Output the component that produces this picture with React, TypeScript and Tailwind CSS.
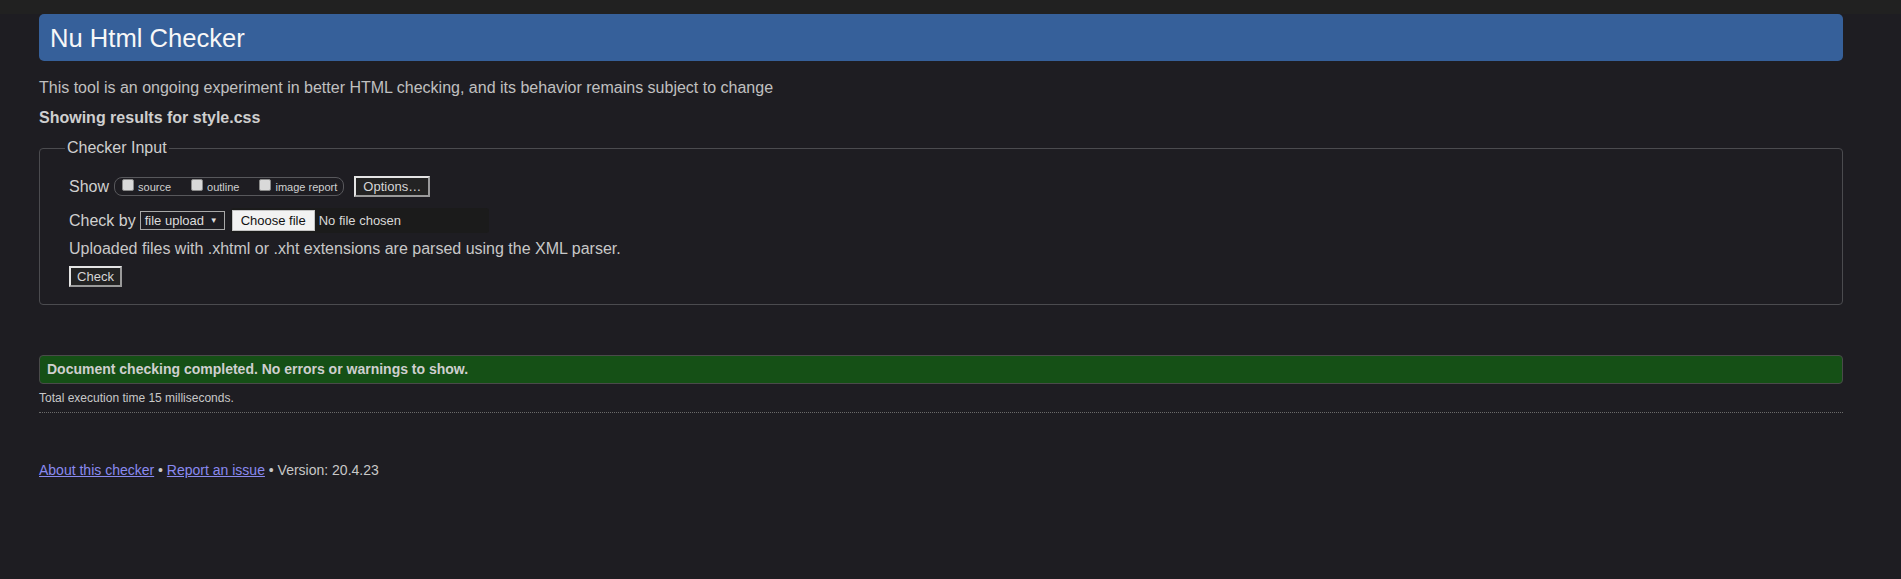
const Checkbox = ({ label }: { label: string }) => (
  <label className="flex items-center gap-[4px]">
    <span className="mb-[4px] h-[12px] w-[12px] rounded-[2px] border border-[#8a8a8a] bg-[#d9d9d9]" />
    <span className="text-[11px] leading-[14px] text-[#d0d0d0]">{label}</span>
  </label>
);

const App = () => {
  return (
    <div className="min-h-[579px] border-t-[14px] border-t-[#212121] bg-[#1e1d22] pl-[39px] pr-[58px] font-['Liberation_Sans',Arial,sans-serif] text-[#c8c8c8]">
      {/* Header */}
      <div className="flex h-[47px] items-center rounded-[5px] bg-[#36609a] px-[11px]">
        <h1 className="text-[25.6px] leading-[30px] text-[#f7f7f7]">Nu Html Checker</h1>
      </div>

      <p className="mt-[17px] text-[16px] leading-[20px] text-[#c0c0c0]">
        This tool is an ongoing experiment in better HTML checking, and its behavior remains subject to change
      </p>
      <p className="mt-[10px] text-[16px] font-bold leading-[20px] text-[#cfcfcf]">
        Showing results for style.css
      </p>

      {/* Checker input */}
      <fieldset className="mt-[10px] rounded-[4px] border border-[#4b4b4f] pb-[16px] pl-[29px]">
        <legend className="ml-[-4px] px-[2px] text-[16px] leading-[20px] text-[#cfcfcf]">Checker Input</legend>

        <div className="mt-[18px] flex h-[21px] items-center">
          <span className="text-[16px] leading-[20px] text-[#d0d0d0]">Show</span>
          <div className="ml-[5px] flex h-[19px] items-center gap-[20px] rounded-[8px] border border-[#58585c] pl-[7px] pr-[6px]">
            <Checkbox label="source" />
            <Checkbox label="outline" />
            <Checkbox label="image report" />
          </div>
          <button className="ml-[10px] h-[21px] w-[76px] border-2 border-t-[#e4e4e4] border-l-[#e4e4e4] border-r-[#9a9a9a] border-b-[#9a9a9a] bg-[#232323] text-[13px] leading-[15px] text-[#d6d6d6]">
            Options…
          </button>
        </div>

        <div className="mt-[11px] flex h-[25px] items-center">
          <span className="text-[16px] leading-[20px] text-[#d0d0d0]">Check by</span>
          <div className="ml-[4px] flex h-[19px] w-[85px] items-center justify-between border border-[#a8a8a8] bg-[#1e1d22] pl-[4px] pr-[6px] text-[13px] text-[#dcdcdc]">
            <span>file upload</span>
            <span className="text-[8px]">▼</span>
          </div>
          <div className="ml-[6px] flex h-[25px] w-[258px] items-center rounded-[3px] bg-[#1b1b1b] pl-[1px]">
            <span className="flex h-[21px] w-[83px] items-center justify-center border border-[#c4c4c4] bg-[#f2f2f2] text-[13px] text-[#111]">
              Choose file
            </span>
            <span className="ml-[4px] text-[13px] text-[#d8d8d8]">No file chosen</span>
          </div>
        </div>

        <p className="mt-[6px] text-[16px] leading-[20px] text-[#c8c8c8]">
          Uploaded files with .xhtml or .xht extensions are parsed using the XML parser.
        </p>

        <button className="mt-[7px] h-[21px] w-[53px] border-2 border-t-[#e4e4e4] border-l-[#e4e4e4] border-r-[#9a9a9a] border-b-[#9a9a9a] bg-[#232323] text-[13px] leading-[15px] text-[#d6d6d6]">
          Check
        </button>
      </fieldset>

      {/* Result */}
      <div className="mt-[50px] flex h-[29px] items-center rounded-[4px] border border-[#4a4a4a] bg-[#155016] pl-[7px]">
        <span className="text-[14px] font-bold text-[#cfcfcf]">
          Document checking completed. No errors or warnings to show.
        </span>
      </div>
      <p className="mt-[7px] text-[12px] leading-[14px] text-[#c8c8c8]">Total execution time 15 milliseconds.</p>
      <div className="mt-[7px] border-t border-dotted border-[#6a6a6a]" />

      {/* Footer */}
      <p className="mt-[49px] text-[14px] leading-[17px] text-[#c8c8c8]">
        <a href="#" className="text-[#8a8af0] underline">About this checker</a> •{" "}
        <a href="#" className="text-[#8a8af0] underline">Report an issue</a> • Version: 20.4.23
      </p>
    </div>
  );
};

export default App;
